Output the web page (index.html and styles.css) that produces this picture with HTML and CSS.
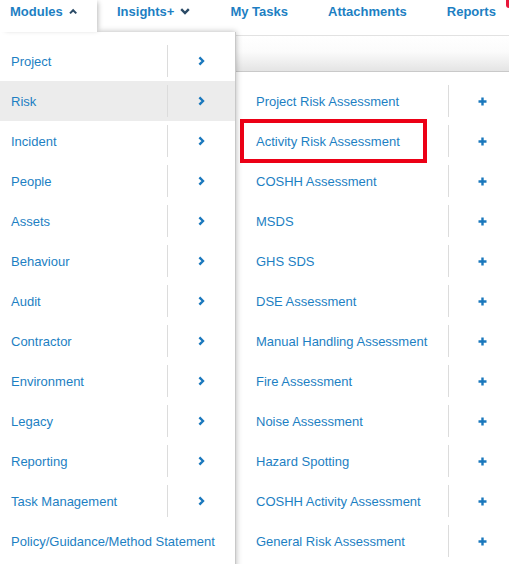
FILE: index.html
```html
<!DOCTYPE html>
<html>
<head>
<meta charset="utf-8">
<link rel="stylesheet" href="styles.css">
</head>
<body>
<header class="topnav">
  <div class="tab tab-active">Modules
    <svg class="caret" width="10" height="7" viewBox="0 0 10 7"><polyline points="1.2,5.8 5,2 8.8,5.8" fill="none" stroke="currentColor" stroke-width="2.4"/></svg>
  </div>
  <div class="tab">Insights+
    <svg class="caret" width="10" height="7" viewBox="0 0 10 7"><polyline points="1.2,1.2 5,5 8.8,1.2" fill="none" stroke="currentColor" stroke-width="2.4"/></svg>
  </div>
  <div class="tab">My Tasks</div>
  <div class="tab">Attachments</div>
  <div class="tab">Reports</div>
  <span class="badge"></span>
</header>
<div class="subbar"></div>

<nav class="menu">
  <ul class="list">
    <li class="row"><span class="label">Project</span><span class="act"><svg class="chev" width="7" height="10" viewBox="0 0 7 10"><polyline points="1.4,1.3 5,5 1.4,8.7" fill="none" stroke="currentColor" stroke-width="2.4"/></svg></span></li>
    <li class="row row-on"><span class="label">Risk</span><span class="act"><svg class="chev" width="7" height="10" viewBox="0 0 7 10"><polyline points="1.4,1.3 5,5 1.4,8.7" fill="none" stroke="currentColor" stroke-width="2.4"/></svg></span></li>
    <li class="row"><span class="label">Incident</span><span class="act"><svg class="chev" width="7" height="10" viewBox="0 0 7 10"><polyline points="1.4,1.3 5,5 1.4,8.7" fill="none" stroke="currentColor" stroke-width="2.4"/></svg></span></li>
    <li class="row"><span class="label">People</span><span class="act"><svg class="chev" width="7" height="10" viewBox="0 0 7 10"><polyline points="1.4,1.3 5,5 1.4,8.7" fill="none" stroke="currentColor" stroke-width="2.4"/></svg></span></li>
    <li class="row"><span class="label">Assets</span><span class="act"><svg class="chev" width="7" height="10" viewBox="0 0 7 10"><polyline points="1.4,1.3 5,5 1.4,8.7" fill="none" stroke="currentColor" stroke-width="2.4"/></svg></span></li>
    <li class="row"><span class="label">Behaviour</span><span class="act"><svg class="chev" width="7" height="10" viewBox="0 0 7 10"><polyline points="1.4,1.3 5,5 1.4,8.7" fill="none" stroke="currentColor" stroke-width="2.4"/></svg></span></li>
    <li class="row"><span class="label">Audit</span><span class="act"><svg class="chev" width="7" height="10" viewBox="0 0 7 10"><polyline points="1.4,1.3 5,5 1.4,8.7" fill="none" stroke="currentColor" stroke-width="2.4"/></svg></span></li>
    <li class="row"><span class="label">Contractor</span><span class="act"><svg class="chev" width="7" height="10" viewBox="0 0 7 10"><polyline points="1.4,1.3 5,5 1.4,8.7" fill="none" stroke="currentColor" stroke-width="2.4"/></svg></span></li>
    <li class="row"><span class="label">Environment</span><span class="act"><svg class="chev" width="7" height="10" viewBox="0 0 7 10"><polyline points="1.4,1.3 5,5 1.4,8.7" fill="none" stroke="currentColor" stroke-width="2.4"/></svg></span></li>
    <li class="row"><span class="label">Legacy</span><span class="act"><svg class="chev" width="7" height="10" viewBox="0 0 7 10"><polyline points="1.4,1.3 5,5 1.4,8.7" fill="none" stroke="currentColor" stroke-width="2.4"/></svg></span></li>
    <li class="row"><span class="label">Reporting</span><span class="act"><svg class="chev" width="7" height="10" viewBox="0 0 7 10"><polyline points="1.4,1.3 5,5 1.4,8.7" fill="none" stroke="currentColor" stroke-width="2.4"/></svg></span></li>
    <li class="row"><span class="label">Task Management</span><span class="act"><svg class="chev" width="7" height="10" viewBox="0 0 7 10"><polyline points="1.4,1.3 5,5 1.4,8.7" fill="none" stroke="currentColor" stroke-width="2.4"/></svg></span></li>
    <li class="row"><span class="label label-wide">Policy/Guidance/Method Statement</span></li>
  </ul>
</nav>

<div class="flyout">
  <ul class="list">
    <li class="row"><span class="label">Project Risk Assessment</span><span class="act"><svg class="plus" width="9" height="9" viewBox="0 0 9 9"><path d="M4.5 0.5v8M0.5 4.5h8" stroke="currentColor" stroke-width="2.4"/></svg></span></li>
    <li class="row"><span class="label">Activity Risk Assessment</span><span class="act"><svg class="plus" width="9" height="9" viewBox="0 0 9 9"><path d="M4.5 0.5v8M0.5 4.5h8" stroke="currentColor" stroke-width="2.4"/></svg></span><span class="mark"></span></li>
    <li class="row"><span class="label">COSHH Assessment</span><span class="act"><svg class="plus" width="9" height="9" viewBox="0 0 9 9"><path d="M4.5 0.5v8M0.5 4.5h8" stroke="currentColor" stroke-width="2.4"/></svg></span></li>
    <li class="row"><span class="label">MSDS</span><span class="act"><svg class="plus" width="9" height="9" viewBox="0 0 9 9"><path d="M4.5 0.5v8M0.5 4.5h8" stroke="currentColor" stroke-width="2.4"/></svg></span></li>
    <li class="row"><span class="label">GHS SDS</span><span class="act"><svg class="plus" width="9" height="9" viewBox="0 0 9 9"><path d="M4.5 0.5v8M0.5 4.5h8" stroke="currentColor" stroke-width="2.4"/></svg></span></li>
    <li class="row"><span class="label">DSE Assessment</span><span class="act"><svg class="plus" width="9" height="9" viewBox="0 0 9 9"><path d="M4.5 0.5v8M0.5 4.5h8" stroke="currentColor" stroke-width="2.4"/></svg></span></li>
    <li class="row"><span class="label">Manual Handling Assessment</span><span class="act"><svg class="plus" width="9" height="9" viewBox="0 0 9 9"><path d="M4.5 0.5v8M0.5 4.5h8" stroke="currentColor" stroke-width="2.4"/></svg></span></li>
    <li class="row"><span class="label">Fire Assessment</span><span class="act"><svg class="plus" width="9" height="9" viewBox="0 0 9 9"><path d="M4.5 0.5v8M0.5 4.5h8" stroke="currentColor" stroke-width="2.4"/></svg></span></li>
    <li class="row"><span class="label">Noise Assessment</span><span class="act"><svg class="plus" width="9" height="9" viewBox="0 0 9 9"><path d="M4.5 0.5v8M0.5 4.5h8" stroke="currentColor" stroke-width="2.4"/></svg></span></li>
    <li class="row"><span class="label">Hazard Spotting</span><span class="act"><svg class="plus" width="9" height="9" viewBox="0 0 9 9"><path d="M4.5 0.5v8M0.5 4.5h8" stroke="currentColor" stroke-width="2.4"/></svg></span></li>
    <li class="row"><span class="label">COSHH Activity Assessment</span><span class="act"><svg class="plus" width="9" height="9" viewBox="0 0 9 9"><path d="M4.5 0.5v8M0.5 4.5h8" stroke="currentColor" stroke-width="2.4"/></svg></span></li>
    <li class="row"><span class="label">General Risk Assessment</span><span class="act"><svg class="plus" width="9" height="9" viewBox="0 0 9 9"><path d="M4.5 0.5v8M0.5 4.5h8" stroke="currentColor" stroke-width="2.4"/></svg></span></li>
  </ul>
</div>
</body>
</html>
```

FILE: styles.css
```css
html, body {
  margin: 0;
  padding: 0;
  background: #fff;
  overflow: hidden;
  width: 509px;
  height: 564px;
}
body {
  font-family: "Liberation Sans", Arial, sans-serif;
  font-size: 13px;
  color: #1d7fc3;
  position: relative;
}
.topnav {
  display: flex;
  height: 32px;
  align-items: stretch;
  position: relative;
  white-space: nowrap;
}
.tab {
  display: flex;
  align-items: center;
  padding: 0 20px;
  font-weight: bold;
  color: #1d7fc3;
  height: 22px;
}
.tab-active {
  padding-left: 10px;
  width: 67px;
  height: 32px;
  align-items: flex-start;
  padding-top: 4px;
  box-sizing: border-box;
  width: 97px;
  background: #fff;
  position: relative;
  z-index: 5;
  box-shadow: 3px 0 5px -2px rgba(0,0,0,0.28);
}
.caret {
  margin-left: 6px;
  color: #2a4a66;
}
.tab-active .caret { margin-top: 4px; }
.badge {
  position: absolute;
  left: 506px;
  top: -4px;
  width: 10px;
  height: 12px;
  border-radius: 3px;
  background: #e8173a;
}
.subbar {
  margin-top: 3px;
  height: 35px;
  border-top: 1px solid #e2e2e2;
  border-bottom: 1px solid #c9c9c9;
  background: linear-gradient(#ffffff 0%, #fbfbfb 45%, #e4e4e4 100%);
}
.menu {
  position: absolute;
  left: 0;
  top: 32px;
  width: 235px;
  height: 560px;
  background: #fff;
  border-right: 1px solid #c8c8c8;
  box-shadow: 0 0 6px rgba(0,0,0,0.3);
  z-index: 4;
}
.list {
  list-style: none;
  margin: 0;
  padding: 9px 0 0;
}
.row {
  display: flex;
  align-items: center;
  height: 40px;
  position: relative;
}
.row-on { background: #ececec; }
.label {
  flex: 0 0 auto;
  box-sizing: border-box;
}
.menu .label {
  width: 167px;
  padding-left: 11px;
}
.menu .label-wide { width: auto; }
.act {
  display: flex;
  align-items: center;
  justify-content: center;
  height: 32px;
  border-left: 1px solid #dcdcdc;
  color: #1a78bd;
}
.menu .act { width: 67px; }
.flyout {
  position: absolute;
  left: 236px;
  top: 72px;
  width: 280px;
  height: 500px;
  background: #fff;
  z-index: 3;
}
.flyout .label {
  width: 212px;
  padding-left: 20px;
}
.flyout .act { width: 66px; }
.plus { display: block; }
.chev { display: block; }
.mark {
  position: absolute;
  left: 4px;
  top: -2px;
  width: 179px;
  height: 36px;
  border: 4px solid #ec0016;
}
```
